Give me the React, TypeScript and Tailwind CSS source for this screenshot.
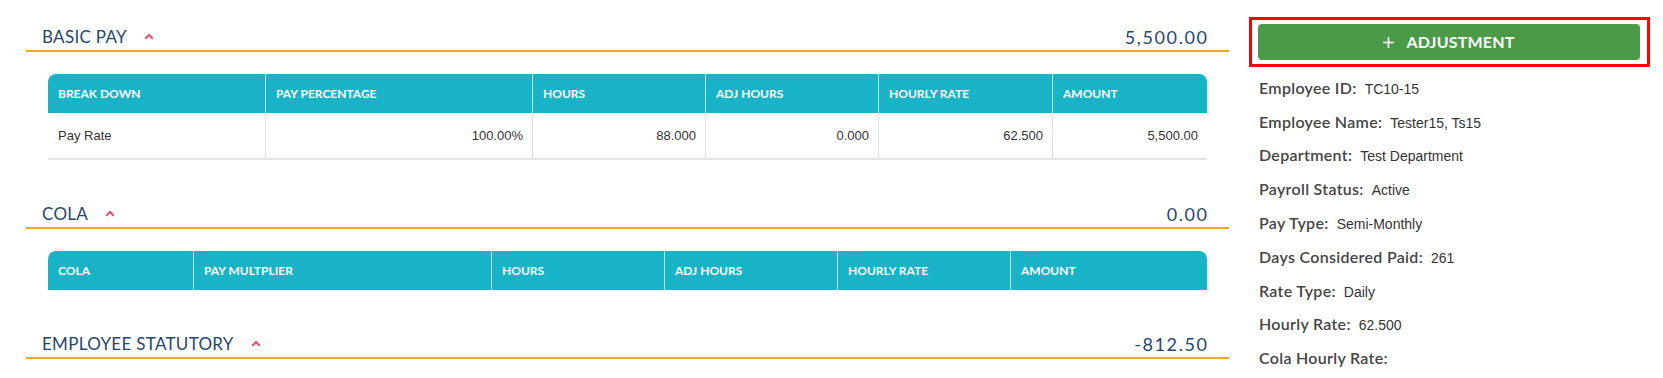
import React from 'react'

const heading = { fontFamily: 'Lato, "Open Sans", sans-serif' }
const body = { fontFamily: '"Liberation Sans", Arial, sans-serif' }

function Chevron() {
  return (
    <svg width="10" height="7" viewBox="0 0 10 7" className="ml-[17px] mt-[-2px]">
      <polyline points="1.2,5.8 5,2 8.8,5.8" fill="none" stroke="#e8506a" strokeWidth="2" />
    </svg>
  )
}

function SectionHeader({ title, amount, first }: { title: string; amount: string; first?: boolean }) {
  return (
    <div
      className={`flex items-center justify-between border-b-2 border-[#f5a623] pl-4 pr-[22px] pb-[1px] ${first ? '' : 'mt-[42px]'}`}
      style={heading}
    >
      <div className="flex items-center">
        <span className="text-[17px] leading-[24px] text-[#264670] tracking-[0.3px]">{title}</span>
        <Chevron />
      </div>
      <span className="text-[18px] leading-[24px] text-[#264670] tracking-[1.6px] mr-[-1.6px]">{amount}</span>
    </div>
  )
}

interface Col {
  label: string
  value?: string
}

function PayTable({ cols, template, rows }: { cols: Col[]; template: string; rows: boolean }) {
  return (
    <div className="mt-[22px] mx-[22px]">
      <div className={`grid ${template} h-[39px] bg-[#19b3c7] rounded-t-[8px] overflow-hidden`}>
        {cols.map((c, i) => (
          <div
            key={c.label}
            className={`flex items-center pl-[10px] text-white text-[12px] font-bold uppercase ${i > 0 ? 'border-l border-[#b8e6ed]' : ''}`}
            style={heading}
          >
            {c.label}
          </div>
        ))}
      </div>
      {rows && (
        <div className={`grid ${template} h-[47px] border-b-2 border-[#e5e5e5]`}>
          {cols.map((c, i) => (
            <div
              key={c.label}
              className={`flex items-center text-[13px] text-[#333] ${i === 0 ? 'pl-[10px]' : 'justify-end pr-[9px] border-l border-[#e2e2e2]'}`}
              style={body}
            >
              {c.value}
            </div>
          ))}
        </div>
      )}
    </div>
  )
}

const info: [string, string][] = [
  ['Employee ID:', 'TC10-15'],
  ['Employee Name:', 'Tester15, Ts15'],
  ['Department:', 'Test Department'],
  ['Payroll Status:', 'Active'],
  ['Pay Type:', 'Semi-Monthly'],
  ['Days Considered Paid:', '261'],
  ['Rate Type:', 'Daily'],
  ['Hourly Rate:', '62.500'],
  ['Cola Hourly Rate:', ''],
]

export default function App() {
  const basicCols: Col[] = [
    { label: 'Break Down', value: 'Pay Rate' },
    { label: 'Pay Percentage', value: '100.00%' },
    { label: 'Hours', value: '88.000' },
    { label: 'Adj Hours', value: '0.000' },
    { label: 'Hourly Rate', value: '62.500' },
    { label: 'Amount', value: '5,500.00' },
  ]
  const colaCols: Col[] = [
    { label: 'Cola' },
    { label: 'Pay Multplier' },
    { label: 'Hours' },
    { label: 'Adj Hours' },
    { label: 'Hourly Rate' },
    { label: 'Amount' },
  ]

  return (
    <div className="w-[1663px] h-[378px] bg-white flex overflow-hidden">
      <div className="ml-[26px] w-[1203px] pt-[25px]">
        <SectionHeader title="BASIC PAY" amount="5,500.00" first />
        <PayTable
          cols={basicCols}
          template="grid-cols-[217px_267px_173px_173px_174px_155px]"
          rows
        />
        <SectionHeader title="COLA" amount="0.00" />
        <PayTable
          cols={colaCols}
          template="grid-cols-[145px_298px_173px_173px_173px_197px]"
          rows={false}
        />
        <SectionHeader title="EMPLOYEE STATUTORY" amount="-812.50" />
      </div>

      <div className="ml-[20px] w-[401px] pt-[17px]">
        <div className="border-[3px] border-[#ff0000] pl-[6px] pr-[7px] pt-[4px] pb-[4px]">
          <button
            className="w-full h-[36px] rounded-[4px] bg-[#4a9a48] text-white flex items-center justify-center gap-[12px]"
            style={heading}
          >
            <svg width="11" height="11" viewBox="0 0 11 11">
              <line x1="5.5" y1="0" x2="5.5" y2="11" stroke="white" strokeWidth="1.6" />
              <line x1="0" y1="5.5" x2="11" y2="5.5" stroke="white" strokeWidth="1.6" />
            </svg>
            <span className="text-[16px] font-bold tracking-[0.2px]">ADJUSTMENT</span>
          </button>
        </div>

        <div className="mt-[4px] pl-[10px]">
          {info.map(([label, value]) => (
            <div key={label} className="h-[33.8px] flex items-center">
              <div className="flex items-baseline gap-[8px]">
                <span className="text-[16px] font-semibold text-[#454545] tracking-[0.3px]" style={heading}>
                  {label}
                </span>
                <span className="text-[14px] text-[#333]" style={body}>
                  {value}
                </span>
              </div>
            </div>
          ))}
        </div>
      </div>
    </div>
  )
}
